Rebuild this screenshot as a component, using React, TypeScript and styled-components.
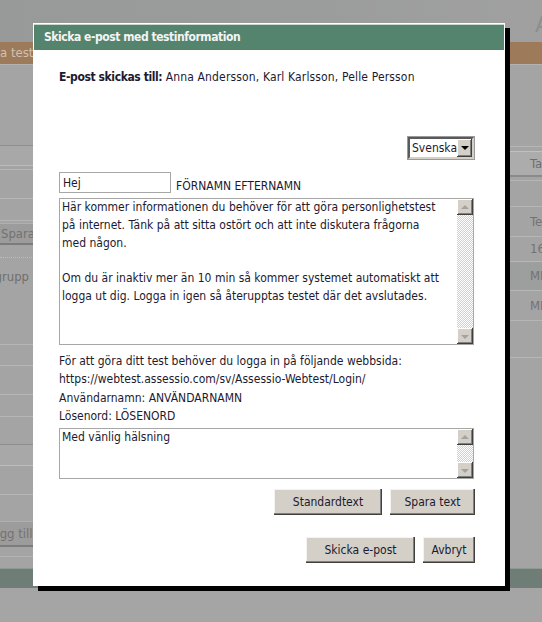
import React from "react";
import styled, { createGlobalStyle } from "styled-components";

const FONT = `"DejaVu Sans Condensed", "DejaVu Sans", Tahoma, sans-serif`;
const INK = "#1c1a30";

const Global = createGlobalStyle`
  html, body { margin: 0; padding: 0; background: #a4a4a4; }
  * { box-sizing: border-box; }
`;

const Stage = styled.div`
  position: relative;
  width: 542px;
  height: 622px;
  overflow: hidden;
  background: #a4a4a4;
  font-family: ${FONT};
`;

/* ---------- dimmed page behind the dialog ---------- */
const Page = styled.div`
  display: flex;
  flex-direction: column;
  height: 100%;
`;

const PageTop = styled.div`
  height: 42px;
  background: linear-gradient(90deg, #979a98 0%, #9b9d9c 60%, #a0a0a0 100%);
  display: flex;
  justify-content: flex-end;
`;

const PageLogo = styled.span`
  font-family: "DejaVu Sans", sans-serif;
  font-size: 22px;
  color: #8b908e;
  margin: 12px -8px 0 0;
`;

const PageBand = styled.div`
  height: 23px;
  background: #9d7a5a;
  border-bottom: 1px solid #b3b3b3;
  color: #d3c1af;
  font-size: 13px;
  line-height: 22px;
  white-space: nowrap;
`;

const PageMain = styled.div`
  height: 503px;
  display: flex;
  justify-content: space-between;
`;

const LeftCol = styled.div`
  width: 110px;
  display: flex;
  flex-direction: column;
`;

const RightCol = styled.div`
  width: 40px;
  display: flex;
  flex-direction: column;
`;

const BgRow = styled.div<{ $h: number; $line?: "solid" | "dotted" | "light"; $dark?: boolean }>`
  height: ${(p) => p.$h + (p.$line ? 1 : 0)}px;
  flex: none;
  border-bottom: ${(p) =>
    p.$line === "dotted"
      ? "1px dotted #bcbcbc"
      : p.$line === "light"
      ? "1px solid #b3b3b3"
      : p.$line
      ? "1px solid #b6b6b6"
      : "none"};
  background: ${(p) => (p.$dark ? "#9d9e9e" : "transparent")};
  color: #737373;
  font-size: 13px;
  line-height: ${(p) => p.$h}px;
  padding-left: 28px;
  white-space: nowrap;
  overflow: hidden;
`;

const BgSelect = styled.div<{ $h: number }>`
  height: ${(p) => p.$h}px;
  flex: none;
  display: flex;
  justify-content: flex-end;
  background: #a8a8a8;
  border-top: 1px solid #8e8e8e;
  border-bottom: 1px solid #bdbdbd;
  padding-right: 2px;
`;

const BgSelectArrow = styled.span`
  width: 15px;
  height: 100%;
  background: #a6a6a6;
  border: 1px solid #b4b4b4;
  border-right-color: #7d7d7d;
  border-bottom-color: #7d7d7d;
  display: flex;
  align-items: center;
  justify-content: center;
  &::after {
    content: "";
    border-left: 3px solid transparent;
    border-right: 3px solid transparent;
    border-top: 3px solid #777;
  }
`;

const BgButton = styled.div<{ $h: number; $shift: number }>`
  height: ${(p) => p.$h}px;
  flex: none;
  margin-left: ${(p) => p.$shift}px;
  width: 130px;
  background: #9c9c9c;
  border-top: 1px solid #b0b0b0;
  border-bottom: 2px solid #7c7c7c;
  color: #727272;
  font-size: 13px;
  line-height: ${(p) => p.$h - 3}px;
  padding-left: 6px;
  white-space: nowrap;
`;

const BgText = styled.div<{ $h: number; $shift: number }>`
  height: ${(p) => p.$h}px;
  flex: none;
  margin-left: ${(p) => p.$shift}px;
  color: #6f6f6f;
  font-size: 13px;
  line-height: ${(p) => p.$h}px;
  white-space: nowrap;
`;

const RightButton = styled.div<{ $h: number }>`
  height: ${(p) => p.$h}px;
  flex: none;
  background: #acacac;
  border-top: 1px solid #c0c0c0;
  border-bottom: 2px solid #8a8a8a;
  color: #6e6e6e;
  font-size: 13px;
  line-height: ${(p) => p.$h - 3}px;
  padding-left: 28px;
`;

const PageFooter = styled.div`
  height: 20px;
  background: #6e7e76;
  border-top: 1px solid #8f9a94;
`;

const PageBottom = styled.div`
  flex: 1;
  background: #a5a5a5;
`;

/* ---------- dialog ---------- */
const Dialog = styled.section`
  position: absolute;
  left: 33px;
  top: 23px;
  width: 472px;
  height: 563px;
  background: #fff;
  border: 1px solid #fff;
  box-shadow: 5px 5px 0 #000;
  display: flex;
  flex-direction: column;
`;

const TitleBar = styled.header`
  height: 26px;
  border-top: 1px solid #c9d6cf;
  background: #55846e;
  color: #f3f3f3;
  font-weight: bold;
  font-size: 12px;
  letter-spacing: -0.45px;
  line-height: 25px;
  padding-left: 10px;
`;

const Body = styled.div`
  flex: 1;
  padding: 18px 30px 0 25px;
  display: flex;
  flex-direction: column;
  color: ${INK};
  font-size: 12px;
`;

const Recipients = styled.p`
  margin: 0;
  line-height: 18px;
`;

const Label = styled.strong`
  font-weight: bold;
  letter-spacing: -0.4px;
`;

const Names = styled.span`
  letter-spacing: 0.15px;
`;

const SelectRow = styled.div`
  margin-top: 51px;
  display: flex;
  justify-content: flex-end;
`;

const Select = styled.div`
  width: 66px;
  height: 22px;
  display: flex;
  background: #fff;
  border: 2px solid;
  border-color: #5a5a5a #d4d0c8 #d4d0c8 #5a5a5a;
  box-shadow: 0 0 0 1px #9a9a9a;
`;

const SelectValue = styled.span`
  flex: 1;
  padding-left: 2px;
  line-height: 18px;
  font-size: 12px;
`;

const ClassicButtonFace = styled.span`
  background: #d4d0c8;
  box-shadow: inset -1px -1px #404040, inset 1px 1px #ffffff, inset -2px -2px #808080;
  display: flex;
  align-items: center;
  justify-content: center;
`;

const SelectArrow = styled(ClassicButtonFace)`
  width: 16px;
  &::after {
    content: "";
    border-left: 4px solid transparent;
    border-right: 4px solid transparent;
    border-top: 4px solid #000;
  }
`;

const GreetingRow = styled.div`
  margin-top: 13px;
  display: flex;
  align-items: flex-start;
`;

const Input = styled.input`
  width: 112px;
  height: 21px;
  border: 1px solid #a7a7a7;
  padding: 0 3px;
  font-family: ${FONT};
  font-size: 12px;
  color: ${INK};
  outline: none;
`;

const NamePlaceholder = styled.span`
  margin: 5px 0 0 5px;
  line-height: 18px;
`;

const TextBox = styled.div<{ $h: number; $mt: number }>`
  margin-top: ${(p) => p.$mt}px;
  height: ${(p) => p.$h}px;
  flex: none;
  border: 1px solid #a7a7a7;
  display: flex;
  background: #fff;
`;

const TextContent = styled.div`
  flex: 1;
  padding: 0 2px;
  line-height: 17.8px;
  white-space: pre;
  overflow: hidden;
`;

const Scrollbar = styled.div`
  width: 16px;
  display: flex;
  flex-direction: column;
`;

const ScrollButton = styled(ClassicButtonFace)<{ $dir: "up" | "down" }>`
  height: 16px;
  flex: none;
  &::after {
    content: "";
    border-left: 4px solid transparent;
    border-right: 4px solid transparent;
    ${(p) =>
      p.$dir === "up"
        ? "border-bottom: 4px solid #a3a3a3; margin-top: -1px;"
        : "border-top: 4px solid #a3a3a3; margin-top: 1px;"}
  }
`;

const Track = styled.div`
  flex: 1;
  background: repeating-conic-gradient(#d4d0c8 0% 25%, #ffffff 0% 50%) 0 0 / 2px 2px;
`;

const Info = styled.p`
  margin: 7px 0 0;
  line-height: 18.3px;
`;

const ButtonRow = styled.div<{ $mt: number }>`
  margin-top: ${(p) => p.$mt}px;
  margin-right: -1px;
  display: flex;
  justify-content: flex-end;
  gap: 8px;
`;

const Button = styled.button<{ $w: number }>`
  width: ${(p) => p.$w}px;
  height: 26px;
  padding: 0;
  border: none;
  background: #d4d0c8;
  box-shadow: inset -1px -1px #404040, inset -2px -2px #808080, inset 1px 1px #f4f3ef;
  font-family: ${FONT};
  font-size: 12px;
  color: ${INK};
  cursor: pointer;
`;

function ClassicTextBox({ height, mt, text }: { height: number; mt: number; text: string }) {
  return (
    <TextBox $h={height} $mt={mt}>
      <TextContent>{text}</TextContent>
      <Scrollbar>
        <ScrollButton $dir="up" />
        <Track />
        <ScrollButton $dir="down" />
      </Scrollbar>
    </TextBox>
  );
}

const MESSAGE =
  "Här kommer informationen du behöver för att göra personlighetstest\n" +
  "på internet. Tänk på att sitta ostört och att inte diskutera frågorna\n" +
  "med någon.\n" +
  "\n" +
  "Om du är inaktiv mer än 10 min så kommer systemet automatiskt att\n" +
  "logga ut dig. Logga in igen så återupptas testet där det avslutades.";

export default function App() {
  return (
    <Stage>
      <Global />
      <Page aria-hidden="true">
        <PageTop>
          <PageLogo>A</PageLogo>
        </PageTop>
        <PageBand>a testinformation</PageBand>
        <PageMain>
          <LeftCol>
            <BgRow $h={80} />
            <BgSelect $h={21}>
              <BgSelectArrow />
            </BgSelect>
            <BgRow $h={3} $line="solid" />
            <BgRow $h={28} $line="solid" />
            <BgRow $h={21} $line="solid" />
            <BgRow $h={2} />
            <BgButton $h={22} $shift={-5}>Spara</BgButton>
            <BgRow $h={12} $line="dotted" />
            <BgRow $h={10} />
            <BgText $h={18} $shift={-26}>Målgrupp</BgText>
            <BgRow $h={58} $line="solid" />
            <BgRow $h={20} $line="solid" />
            <BgRow $h={28} $line="solid" />
            <BgRow $h={21} $line="solid" />
            <BgRow $h={27} />
            <BgSelect $h={22}>
              <BgSelectArrow />
            </BgSelect>
            <BgRow $h={28} $line="solid" />
            <BgRow $h={26} />
            <BgButton $h={26} $shift={-20}>Lägg till</BgButton>
            <BgRow $h={9} $line="light" />
          </LeftCol>
          <RightCol>
            <BgRow $h={81} $line="solid" />
            <BgRow $h={4} />
            <RightButton $h={26}>Ta</RightButton>
            <BgRow $h={3} $line="solid" />
            <BgRow $h={25} $line="solid" />
            <BgRow $h={29} $line="solid">Te</BgRow>
            <BgRow $h={24} $line="solid">16</BgRow>
            <BgRow $h={28} $line="solid" $dark>MI</BgRow>
            <BgRow $h={29} $line="solid">MI</BgRow>
            <BgRow $h={36} $line="solid" />
          </RightCol>
        </PageMain>
        <PageFooter />
        <PageBottom />
      </Page>

      <Dialog role="dialog" aria-label="Skicka e-post med testinformation">
        <TitleBar>Skicka e-post med testinformation</TitleBar>
        <Body>
          <Recipients>
            <Label>E-post skickas till:</Label>{" "}
            <Names>Anna Andersson, Karl Karlsson, Pelle Persson</Names>
          </Recipients>
          <SelectRow>
            <Select>
              <SelectValue>Svenska</SelectValue>
              <SelectArrow />
            </Select>
          </SelectRow>
          <GreetingRow>
            <Input defaultValue="Hej" />
            <NamePlaceholder>FÖRNAMN EFTERNAMN</NamePlaceholder>
          </GreetingRow>
          <ClassicTextBox height={147} mt={3} text={MESSAGE} />
          <Info>
            För att göra ditt test behöver du logga in på följande webbsida:
            <br />
            https://webtest.assessio.com/sv/Assessio-Webtest/Login/
            <br />
            Användarnamn: ANVÄNDARNAMN
            <br />
            Lösenord: LÖSENORD
          </Info>
          <ClassicTextBox height={51} mt={3} text="Med vänlig hälsning" />
          <ButtonRow $mt={10}>
            <Button $w={108}>Standardtext</Button>
            <Button $w={85}>Spara text</Button>
          </ButtonRow>
          <ButtonRow $mt={22}>
            <Button $w={109}>Skicka e-post</Button>
            <Button $w={52}>Avbryt</Button>
          </ButtonRow>
        </Body>
      </Dialog>
    </Stage>
  );
}
